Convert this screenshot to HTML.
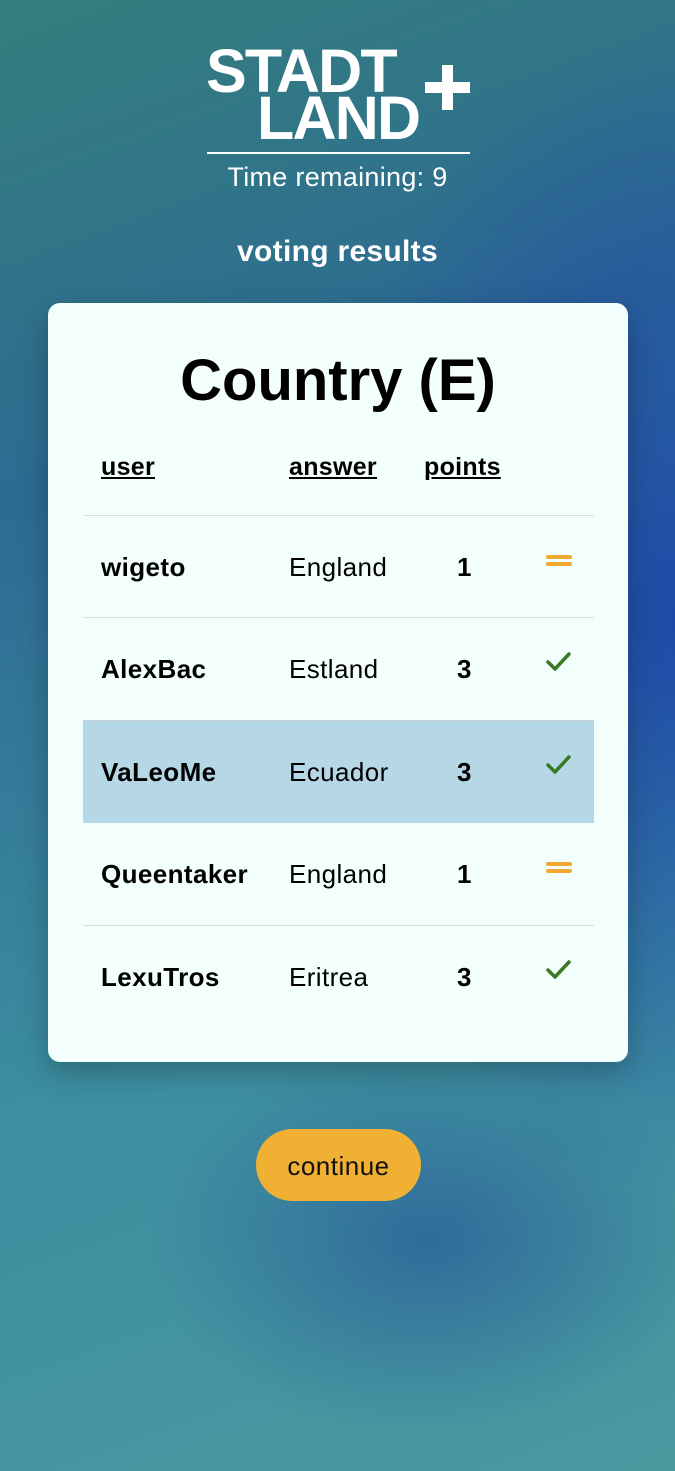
<!DOCTYPE html>
<html><head><meta charset="utf-8"><style>
*{margin:0;padding:0;box-sizing:border-box}
html,body{width:675px;height:1471px;overflow:hidden}
body{font-family:"Liberation Sans",sans-serif;position:relative;
background:
radial-gradient(ellipse 520px 800px at 680px 620px,rgba(28,68,170,.9),rgba(28,68,170,0) 72%),
radial-gradient(ellipse 380px 260px at 430px 1240px,rgba(35,80,150,.6),rgba(35,80,150,0) 75%),
linear-gradient(160deg,#347f7d 0%,#2d6b93 30%,#3c8ea0 65%,#4a9aa0 100%);}
.abs{position:absolute}
.logo{font-weight:bold;color:#fff;font-size:61px;letter-spacing:-1.8px;line-height:1;transform-origin:0 0}
.row{position:absolute;left:35px;width:511px;height:103px;border-top:1px solid #d8dedd;font-size:26px;color:#000;letter-spacing:.4px}
.row span{position:absolute;top:36px}
.u{left:18px;font-weight:bold}.a{left:206px}.p{left:374px;font-weight:bold}
.ic{position:absolute;left:462px}
.card{left:48px;top:303px;width:580px;height:759px;background:#f2fffd;border-radius:12px;box-shadow:0 10px 30px rgba(0,0,0,.25)}
.h{position:absolute;top:150px;font-size:25px;font-weight:bold;text-decoration:underline;letter-spacing:.3px}
</style></head><body>
<div class="abs logo" style="left:206px;top:41px">STADT</div>
<div class="abs logo" style="left:257px;top:88px">LAND</div>
<div class="abs" style="left:425px;top:82px;width:45px;height:11px;background:#fff"></div>
<div class="abs" style="left:442px;top:65px;width:11px;height:45px;background:#fff"></div>
<div class="abs" style="left:207px;top:152px;width:263px;height:2px;background:#fff"></div>
<div class="abs" style="left:0;width:675px;top:162px;text-align:center;color:#fff;font-size:27px;letter-spacing:.3px">Time remaining: 9</div>
<div class="abs" style="left:0;width:675px;top:235px;text-align:center;color:#fff;font-size:30px;font-weight:bold;letter-spacing:.3px">voting results</div>
<div class="abs card">
<div class="abs" style="left:0;width:580px;top:44px;text-align:center;font-size:58px;font-weight:bold">Country (E)</div>
<div class="h" style="left:53px">user</div>
<div class="h" style="left:241px">answer</div>
<div class="h" style="left:376px">points</div>
<div class="row" style="top:212px"><span class="u">wigeto</span><span class="a">England</span><span class="p">1</span>
<svg class="ic" style="top:38px" width="28" height="14"><path d="M3 3h22M3 10h22" stroke="#f0a830" stroke-width="4" stroke-linecap="round"/></svg></div>
<div class="row" style="top:314px"><span class="u">AlexBac</span><span class="a">Estland</span><span class="p">3</span>
<svg class="ic" style="top:32px" width="28" height="22"><path d="M3 12l7 7L24 4" fill="none" stroke="#3a7a22" stroke-width="3.5" stroke-linecap="round" stroke-linejoin="round"/></svg></div>
<div class="row" style="top:417px;background:#b5d7e6;border-top-color:#c5d0d5"><span class="u">VaLeoMe</span><span class="a">Ecuador</span><span class="p">3</span>
<svg class="ic" style="top:32px" width="28" height="22"><path d="M3 12l7 7L24 4" fill="none" stroke="#3a7a22" stroke-width="3.5" stroke-linecap="round" stroke-linejoin="round"/></svg></div>
<div class="row" style="top:519px;border-top-color:transparent"><span class="u">Queentaker</span><span class="a">England</span><span class="p">1</span>
<svg class="ic" style="top:38px" width="28" height="14"><path d="M3 3h22M3 10h22" stroke="#f0a830" stroke-width="4" stroke-linecap="round"/></svg></div>
<div class="row" style="top:622px"><span class="u">LexuTros</span><span class="a">Eritrea</span><span class="p">3</span>
<svg class="ic" style="top:32px" width="28" height="22"><path d="M3 12l7 7L24 4" fill="none" stroke="#3a7a22" stroke-width="3.5" stroke-linecap="round" stroke-linejoin="round"/></svg></div>
</div>
<div class="abs" style="left:256px;top:1129px;width:165px;height:72px;border-radius:36px;background:#f0b033;text-align:center;line-height:74px;font-size:26px;color:#111;letter-spacing:.5px">continue</div>
</body></html>
